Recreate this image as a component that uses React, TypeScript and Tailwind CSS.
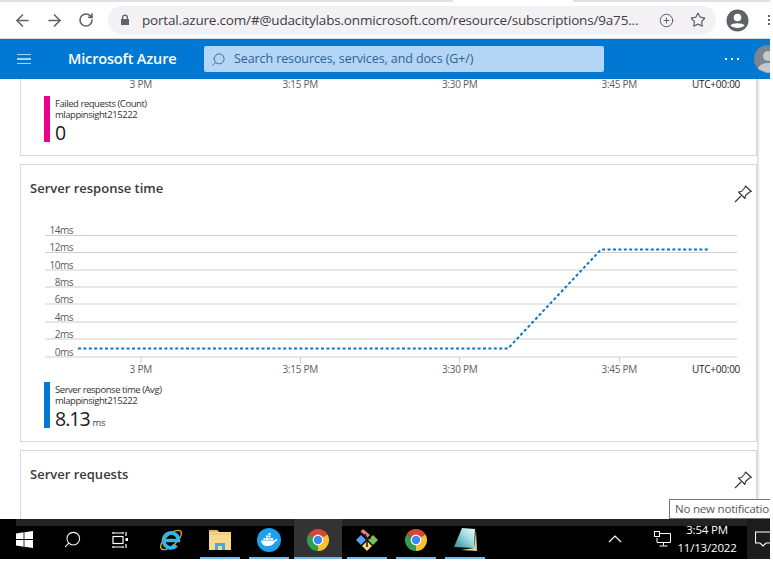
import React from 'react';
import { ArrowLeft, ArrowRight, RotateCw, CirclePlus, Star, Search } from 'lucide-react';

const gridLines = [
  { label: '14ms', y: 13.5 },
  { label: '12ms', y: 30.5 },
  { label: '10ms', y: 48 },
  { label: '8ms', y: 65 },
  { label: '6ms', y: 82 },
  { label: '4ms', y: 100 },
  { label: '2ms', y: 117 },
  { label: '0ms', y: 135 },
];

const ticks = [120, 279.5, 438.5, 598.5];

const ChromeIcon = () => (
  <svg width="24" height="24" viewBox="0 0 24 24">
    <path d="M12 12 L2.47 6.5 A11 11 0 0 1 21.53 6.5 Z" fill="#db4437" />
    <path d="M12 12 L21.53 6.5 A11 11 0 0 1 12 23 Z" fill="#fbc02d" />
    <path d="M12 12 L12 23 A11 11 0 0 1 2.47 6.5 Z" fill="#2e9e4f" />
    <circle cx="12" cy="12" r="5.4" fill="#fff" />
    <circle cx="12" cy="12" r="4.2" fill="#4285f4" />
  </svg>
);

const IeIcon = () => (
  <svg width="24" height="26" viewBox="0 0 24 26">
    <ellipse cx="12" cy="13" rx="13" ry="5.5" transform="rotate(-42 12 13)" fill="none" stroke="#d9a520" strokeWidth="1.4" />
    <path d="M5.5 13.5 H19.5 A7.5 7.5 0 1 0 17.5 18.5" fill="none" stroke="#35b5ea" strokeWidth="3.6" />
  </svg>
);

const FolderIcon = () => (
  <svg width="24" height="22" viewBox="0 0 24 22">
    <path d="M1 1 H9 L11 3 H23 V21 H1 Z" fill="#f7d98c" />
    <path d="M1 1 H9 L11 3 H1 Z" fill="#e8b64c" />
    <path d="M1 5 H23" stroke="#e8c06a" strokeWidth="1" />
    <path d="M7 21 V14 H17 V21 H14 V17 H10 V21 Z" fill="#3fa9e8" />
  </svg>
);

const DockerIcon = () => (
  <svg width="24" height="24" viewBox="0 0 24 24">
    <circle cx="12" cy="12" r="12" fill="#1ba1f0" />
    <path d="M4 12.5 H17.5 C18 11.5 19 11 20.5 11.5 C20 13 19 13.5 18 13.5 C16.8 16.5 14 18 10.5 18 C6.5 18 4.5 16 4 12.5 Z" fill="#fff" />
    <path d="M6.5 10 h2 v2 h-2 z M9 10 h2 v2 h-2 z M11.5 10 h2 v2 h-2 z M14 10 h2 v2 h-2 z M9 7.5 h2 v2 h-2 z M11.5 7.5 h2 v2 h-2 z M11.5 5 h2 v2 h-2 z" fill="#fff" />
  </svg>
);

const GitIcon = () => (
  <svg width="24" height="24" viewBox="0 0 24 24">
    <path d="M1 12 L6 7 L11 12 L6 17 Z" fill="#5f9cf0" />
    <path d="M13 12 L18 7 L23 12 L18 17 Z" fill="#7cc05a" />
    <path d="M7 18 L12 13 L17 18 L12 23 Z" fill="#f5d76e" />
    <path d="M5.5 3.5 L8 1 L15 7 L12.5 9.5 Z" fill="#ef7a7a" />
    <path d="M10 6 L12 14 V19 M12 11 L16 10" fill="none" stroke="#222" strokeWidth="1.6" />
  </svg>
);

const NotepadIcon = () => (
  <svg width="24" height="26" viewBox="0 0 24 26">
    <defs>
      <linearGradient id="pad" x1="0" y1="1" x2="1" y2="0">
        <stop offset="0" stopColor="#2a8c9c" />
        <stop offset="0.6" stopColor="#a8dde4" />
        <stop offset="1" stopColor="#eef8fa" />
      </linearGradient>
    </defs>
    <path d="M9 1 L22 2 L21 21 L1 20 Z" fill="url(#pad)" />
    <path d="M21 21 L23 3 L24 24 L8 23 Z" fill="#d8d2a8" />
  </svg>
);

const PinIcon = () => (
  <svg width="18" height="18" viewBox="0 0 18 18" fill="none" stroke="#333" strokeWidth="1.1">
    <path d="M11.5 1 L17.3 6.5 L15.5 7 L11.5 10.5 L11 13.5 L4.5 7 L7.5 6.5 L11 2.5 Z" strokeLinejoin="round" />
    <path d="M7 11 L1 17" />
  </svg>
);

const AxisLabels = () => (
  <div className="flex pl-[40px] text-[10px] leading-[11px] tracking-[-0.25px] text-[#5c5c5c]">
    <span className="w-[159.5px] text-center">3 PM</span>
    <span className="w-[159.5px] text-center">3:15 PM</span>
    <span className="w-[159.5px] text-center">3:30 PM</span>
    <span className="w-[159.5px] text-center">3:45 PM</span>
    <span className="ml-[-7px] whitespace-nowrap text-[#1a1a1a]">UTC+00:00</span>
  </div>
);

const Legend = ({ color, name, value, unit }: { color: string; name: string; value: string; unit?: string }) => (
  <div className="ml-[23px] flex gap-[5px]">
    <div className={`h-[46px] w-[6px] ${color}`}></div>
    <div className="pt-[2px] text-[9.5px] leading-[11px] tracking-[-0.45px] text-[#333]">
      <div>{name}</div>
      <div>mlappinsight215222</div>
      <div className="mt-[1px] flex items-baseline gap-[3px] text-[19.5px] leading-[24px] tracking-[-1px] text-[#1a1a1a]">
        {value}
        {unit && <span className="text-[9.5px] tracking-[-0.3px] text-[#444]">{unit}</span>}
      </div>
    </div>
  </div>
);

const TaskSlot = ({ children, bar, active, className }: { children?: React.ReactNode; bar?: boolean; active?: boolean; className?: string }) => (
  <div className={`relative flex h-full w-[48px] shrink-0 items-center justify-center pt-[1px] ${active ? 'bg-[#333]' : ''} ${className ?? ''}`}>
    {children}
    {bar && <div className={`absolute bottom-0 h-[2px] bg-[#76b9ed] ${active ? 'inset-x-0' : 'inset-x-[4px]'}`}></div>}
  </div>
);

export default function App() {
  return (
    <div className="relative flex h-[559px] w-[770px] flex-col overflow-hidden bg-white font-['Open_Sans',sans-serif]">
      {/* browser chrome */}
      <div className="flex h-[2px] bg-[#dee1e6]">
        <div className="ml-[453px] w-[120px] bg-white"></div>
      </div>
      <div className="flex h-[37px] items-center border-b border-[#d8dadd] text-[#5f6368]">
        <ArrowLeft size={19} strokeWidth={2} className="ml-[13px] shrink-0" />
        <ArrowRight size={19} strokeWidth={2} className="ml-[13px] shrink-0" />
        <RotateCw size={16} strokeWidth={2.4} className="ml-[14px] shrink-0" />
        <div className="ml-[14px] flex h-[28px] w-[608px] shrink-0 items-center rounded-full bg-[#f4f1f5] pl-[12px]">
          <svg width="10" height="12" viewBox="0 0 10 12" fill="#5f6368">
            <path d="M1 5 H2 V3.5 A3 3 0 0 1 8 3.5 V5 H9 V11 H1 Z M3.3 5 H6.7 V3.5 A1.7 1.7 0 0 0 3.3 3.5 Z" fillRule="evenodd" />
          </svg>
          <span className="ml-[12px] w-[498px] shrink-0 whitespace-nowrap text-[13.5px] tracking-[-0.18px] text-[#3c4043]">
            portal.azure.com/#@udacitylabs.onmicrosoft.com/resource/subscriptions/9a75...
          </span>
          <CirclePlus size={15} strokeWidth={1.6} className="ml-[19px] shrink-0" />
          <Star size={16} strokeWidth={1.8} className="ml-[16px] shrink-0" />
        </div>
        <svg width="23" height="23" viewBox="0 0 23 23" className="ml-[10px] shrink-0">
          <circle cx="11.5" cy="11.5" r="11" fill="#5f6368" />
          <circle cx="11.5" cy="8.5" r="3.8" fill="#fff" />
          <path d="M4.5 16.5 C6 13.5 17 13.5 18.5 16.5 C16 19.7 7 19.7 4.5 16.5 Z" fill="#fff" />
        </svg>
        <div className="ml-[19px] flex shrink-0 flex-col gap-[2px]">
          <div className="size-[2px] bg-[#5f6368]"></div>
          <div className="size-[2px] bg-[#5f6368]"></div>
          <div className="size-[2px] bg-[#5f6368]"></div>
        </div>
      </div>

      {/* azure top bar */}
      <div className="flex h-[40px] shrink-0 items-center bg-[#0078d4] text-white">
        <div className="ml-[17px] flex w-[14px] shrink-0 flex-col gap-[3px]">
          <div className="h-[1.5px] bg-[#a8d0f0]"></div>
          <div className="h-[1.5px] bg-[#a8d0f0]"></div>
          <div className="h-[1.5px] bg-[#a8d0f0]"></div>
        </div>
        <span className="ml-[37px] w-[136px] shrink-0 whitespace-nowrap text-[14.5px] font-semibold tracking-[-0.15px]">Microsoft Azure</span>
        <div className="flex h-[26px] w-[400px] shrink-0 items-center rounded-[2px] bg-[#b3d5f6] pl-[7px] text-[#2f6492]">
          <Search size={15} strokeWidth={1.4} className="-scale-x-100" />
          <span className="ml-[8px] whitespace-nowrap text-[12.5px] tracking-[-0.1px]">Search resources, services, and docs (G+/)</span>
        </div>
        <div className="ml-[121px] flex shrink-0 gap-[4px]">
          <div className="size-[2px] bg-white"></div>
          <div className="size-[2px] bg-white"></div>
          <div className="size-[2px] bg-white"></div>
        </div>
        <svg width="28" height="28" viewBox="0 0 28 28" className="ml-[15px] shrink-0">
          <circle cx="14" cy="14" r="14" fill="#7a868f" />
          <circle cx="14" cy="11" r="5" fill="#c4c9cd" />
          <path d="M4 24 C6 16 22 16 24 24 L14 28 Z" fill="#c4c9cd" />
        </svg>
      </div>

      {/* scrolled blade content */}
      <div className="relative min-h-0 flex-1 overflow-hidden bg-white pl-[20px]">
        <div className="absolute inset-y-0 left-[757px] w-[3px] bg-gradient-to-r from-[#d8d8d8] to-white"></div>
        <div className="h-[77px] w-[737px] border border-t-0 border-[#d9d9d9]">
          <AxisLabels />
          <div className="mt-[6px]">
            <Legend color="bg-[#ec008c]" name="Failed requests (Count)" value="0" />
          </div>
        </div>

        <div className="mt-[8px] h-[278px] w-[737px] border border-[#d9d9d9]">
          <div className="flex h-[57px] justify-between pr-[4px] pl-[9px]">
            <h3 className="pt-[14px] text-[13px] leading-[18px] font-semibold text-[#3a3a3a]">Server response time</h3>
            <div className="pt-[20px]">
              <PinIcon />
            </div>
          </div>
          <svg width="735" height="142" className="block">
            {gridLines.map((g) => (
              <g key={g.label}>
                <line x1="24" x2="716" y1={g.y} y2={g.y} stroke="#cfcfcf" />
                <text x="52" y={g.y - 1.5} textAnchor="end" fontSize="10" letterSpacing="-0.5" fill="#5c5c5c">{g.label}</text>
              </g>
            ))}
            {ticks.map((x) => (
              <line key={x} x1={x} x2={x} y1="135" y2="141" stroke="#cfcfcf" />
            ))}
            <polyline
              points="57,126.5 487,126.5 580,27.5 689,27.5"
              fill="none"
              stroke="#0078d4"
              strokeWidth="2"
              strokeDasharray="3 2.4"
            />
          </svg>
          <AxisLabels />
          <div className="mt-[7px]">
            <Legend color="bg-[#0078d4]" name="Server response time (Avg)" value="8.13" unit="ms" />
          </div>
        </div>

        <div className="mt-[8px] h-[120px] w-[737px] border border-[#d9d9d9]">
          <div className="flex justify-between pr-[4px] pl-[9px]">
            <h3 className="pt-[14px] text-[13px] leading-[18px] font-semibold text-[#3a3a3a]">Server requests</h3>
            <div className="pt-[20px]">
              <PinIcon />
            </div>
          </div>
        </div>
      </div>

      {/* windows taskbar */}
      <div className="relative flex h-[40px] shrink-0 items-center bg-black text-white">
        <div className="absolute top-0 right-0 left-[16px] h-[7px] bg-[#232323]"></div>
        <div className="absolute top-0 left-[294px] h-[7px] w-[48px] bg-[#555]"></div>
        <TaskSlot>
          <svg width="17" height="17" viewBox="0 0 17 17" fill="#fff">
            <path d="M0 2.4 L7.6 1.3 V8 H0 Z M8.4 1.2 L17 0 V8 H8.4 Z M0 9 H7.6 V15.7 L0 14.6 Z M8.4 9 H17 V17 L8.4 15.8 Z" />
          </svg>
        </TaskSlot>
        <TaskSlot>
          <Search size={19} strokeWidth={1.3} className="-scale-x-100" />
        </TaskSlot>
        <TaskSlot>
          <svg width="17" height="16" viewBox="0 0 17 16" fill="none" stroke="#fff" strokeWidth="1.2">
            <path d="M1 1 H11 M1 15 H11 M11 0 V2 M1 0 V2 M11 14 V16 M1 14 V16" />
            <rect x="1" y="4.5" width="10" height="7" />
            <path d="M14 0 V4 M14 12 V16" />
            <rect x="13.5" y="6" width="2.5" height="3" fill="#fff" stroke="none" />
          </svg>
        </TaskSlot>
        <TaskSlot className="ml-[3px]">
          <IeIcon />
        </TaskSlot>
        <TaskSlot bar className="ml-[1px]">
          <FolderIcon />
        </TaskSlot>
        <TaskSlot bar className="ml-[1px]">
          <DockerIcon />
        </TaskSlot>
        <TaskSlot bar active className="ml-[1px]">
          <ChromeIcon />
        </TaskSlot>
        <TaskSlot bar className="ml-[1px]">
          <GitIcon />
        </TaskSlot>
        <TaskSlot bar className="ml-[1px]">
          <ChromeIcon />
        </TaskSlot>
        <TaskSlot bar className="ml-[1px]">
          <NotepadIcon />
        </TaskSlot>
        <svg width="14" height="8" viewBox="0 0 14 8" fill="none" stroke="#fff" strokeWidth="1.2" className="relative ml-[119px] shrink-0">
          <path d="M1 7 L7 1 L13 7" />
        </svg>
        <svg width="17" height="16" viewBox="0 0 17 16" fill="none" stroke="#fff" className="relative ml-[32px] shrink-0">
          <path d="M5 2.5 H16.5 V11.5 H3 V7 M9.5 11.5 V14.5 M5.5 15 H13.5" />
          <rect x="0.5" y="0.5" width="5" height="5" fill="#000" />
        </svg>
        <div className="relative ml-[2px] w-[68px] shrink-0 text-center text-[11.5px] leading-[18px] tracking-[-0.2px] whitespace-nowrap">
          <div>3:54 PM</div>
          <div>11/13/2022</div>
        </div>
        <div className="relative ml-[6px] flex h-full w-[31px] shrink-0 items-center justify-center bg-[#1c1c1c]">
          <svg width="16" height="16" viewBox="0 0 16 16" fill="none" stroke="#fff" strokeWidth="1.1">
            <path d="M0.5 1 H15.5 V12 H11 L8 15 L5 12 H0.5 Z" />
          </svg>
        </div>
      </div>

      {/* tooltip from the notification button */}
      <div className="absolute top-[499px] left-[669px] border border-[#767676] bg-white pr-[6px] pl-[5px] text-[11.5px] leading-[18px] tracking-[-0.2px] whitespace-nowrap text-[#575757]">
        No new notifications
      </div>
    </div>
  );
}
